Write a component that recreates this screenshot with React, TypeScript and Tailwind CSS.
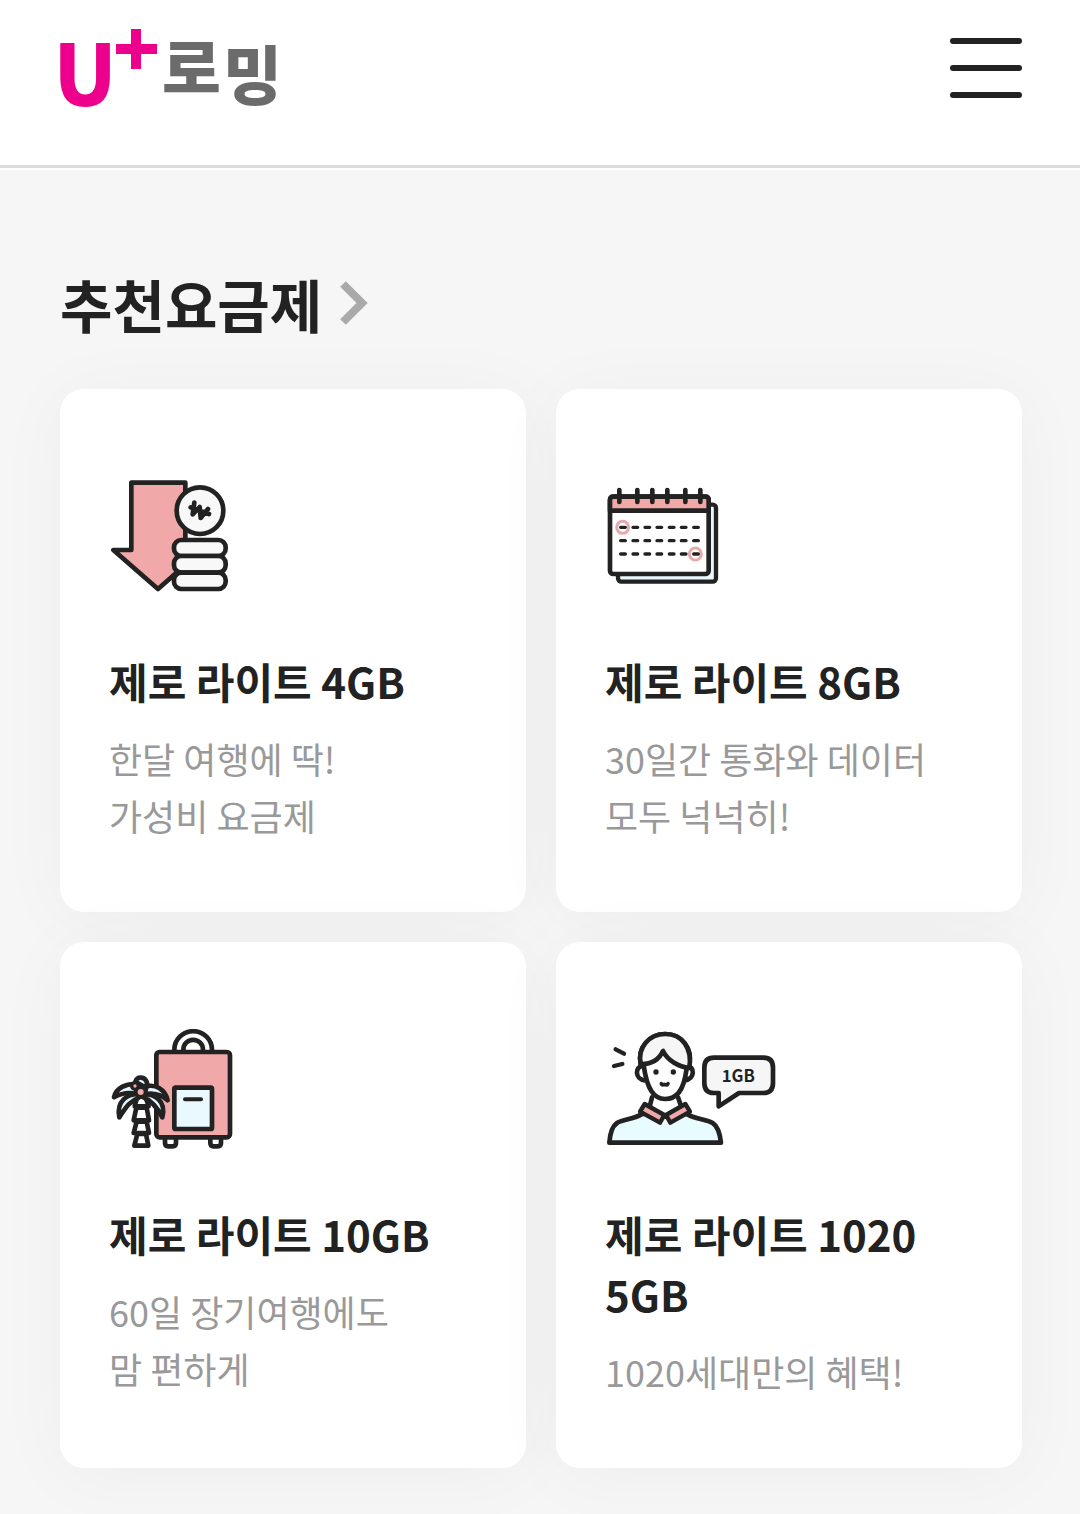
import type { ReactNode } from "react";

const plans = [
  {
    id: "lite-4",
    icon: <SavingIcon />,
    title: "제로 라이트 4GB",
    lines: ["한달 여행에 딱!", "가성비 요금제"],
  },
  {
    id: "lite-8",
    icon: <CalendarIcon />,
    title: "제로 라이트 8GB",
    lines: ["30일간 통화와 데이터", "모두 넉넉히!"],
  },
  {
    id: "lite-10",
    icon: <LuggageIcon />,
    title: "제로 라이트 10GB",
    lines: ["60일 장기여행에도", "맘 편하게"],
  },
  {
    id: "lite-1020",
    icon: <YouthIcon />,
    title: "제로 라이트 1020 5GB",
    lines: ["1020세대만의 혜택!"],
  },
];

export default function App() {
  return (
    <div className="flex min-h-screen flex-col bg-white font-['Noto_Sans_CJK_KR',sans-serif] text-[#222222]">
      <Header />
      <main className="mt-0.5 flex-1 bg-[#f6f6f6] pt-[93px] pr-[58px] pb-[46px] pl-[60px]">
        <h2 className="text-[57px] leading-[80px] font-bold">
          <a href="#plans" className="inline-flex items-center gap-[18px]">
            추천요금제
            <Chevron />
          </a>
        </h2>

        {/* Plan cards */}
        <div id="plans" className="mt-[46px] grid grid-cols-2 gap-[30px]">
          {plans.map((plan) => (
            <PlanCard key={plan.id} icon={plan.icon} title={plan.title} lines={plan.lines} />
          ))}
        </div>
      </main>
    </div>
  );
}

function Header() {
  return (
    <header className="flex items-center justify-between border-b-3 border-[#dddddd] pr-[58px] pb-[29px] pl-[52px]">
      <a href="#" aria-label="U+로밍">
        <Logo />
      </a>
      <button type="button" aria-label="메뉴" className="flex h-[60px] w-[72px] cursor-pointer flex-col justify-between">
        <span className="h-1.5 w-full rounded-full bg-[#222222]" />
        <span className="h-1.5 w-full rounded-full bg-[#222222]" />
        <span className="h-1.5 w-full rounded-full bg-[#222222]" />
      </button>
    </header>
  );
}

function PlanCard({ icon, title, lines }: { icon: ReactNode; title: string; lines: string[] }) {
  return (
    <a
      href="#"
      className="block rounded-3xl bg-white px-[49px] pt-[87px] pb-[68px] shadow-[0_6px_75px_rgba(0,0,0,0.04)]"
    >
      {icon}
      <h3 className="mt-[55px] text-[42px] leading-[60px] font-bold">{title}</h3>
      <p className="mt-[19px] text-[36px] leading-[57px] text-[#999999]">
        {lines.map((line) => (
          <span key={line} className="block">
            {line}
          </span>
        ))}
      </p>
    </a>
  );
}

function Logo() {
  return (
    <svg viewBox="0 0 240 136" className="h-[136px] w-[240px]" fontWeight="900">
      <text x="2" y="105" fontSize="83" fontWeight="700" fill="#ec008c" stroke="#ec008c" strokeWidth="2">
        U
      </text>
      <path d="M64 49H105M84 29V69" stroke="#ec008c" strokeWidth="10" />
      <text x="110" y="92" fontSize="64" fill="#6b6b6b">
        로
      </text>
      <text x="171" y="99" fontSize="64" fill="#6b6b6b">
        밍
      </text>
    </svg>
  );
}

function Chevron() {
  return (
    <svg viewBox="0 0 28 46" className="h-[46px] w-7" fill="none" stroke="#aaaaaa" strokeWidth="8">
      <path d="M3 4L22 23L3 42" />
    </svg>
  );
}

function SavingIcon() {
  return (
    <svg
      viewBox="27 33 372 360"
      className="h-[120px] w-[124px]"
      fill="#f8f8f8"
      stroke="#222222"
      strokeWidth="14"
      strokeLinecap="round"
      strokeLinejoin="round"
    >
      <path d="M94 53H256V300L174 372L40 255H94Z" fill="#f0a8a8" />
      <circle cx="300" cy="137" r="70" />
      <path d="M283 113L278 148L299 126L302 159L324 132M272 127L327 147" fill="none" />
      <rect x="222" y="225" width="155" height="48" rx="22" />
      <rect x="222" y="273" width="155" height="50" rx="22" />
      <rect x="222" y="323" width="155" height="49" rx="22" />
    </svg>
  );
}

function CalendarIcon() {
  return (
    <svg
      viewBox="27 3 372 360"
      className="h-[120px] w-[124px]"
      fill="none"
      stroke="#222222"
      strokeWidth="14"
      strokeLinecap="round"
      strokeLinejoin="round"
    >
      <rect x="66" y="89" width="294" height="231" rx="10" fill="#e9f8fd" strokeWidth="13" />
      <rect x="42" y="65" width="296" height="232" rx="10" fill="#ffffff" />
      <path d="M42 107V75Q42 65 52 65H328Q338 65 338 75V107Z" fill="#f0a8a8" />
      <path d="M70 45V81M124 45V81M169 45V81M214 45V81M268 45V81M313 45V81" />
      <circle cx="80" cy="157" r="18" stroke="#e6aaaa" strokeWidth="9" />
      <circle cx="298" cy="237" r="18" stroke="#e6aaaa" strokeWidth="9" />
      {[157, 197, 237].map((y) => (
        <path
          key={y}
          d={`M74 ${y}h14m23 0h14m22 0h14m22 0h14m23 0h14m22 0h14m23 0h14`}
          strokeWidth="10"
        />
      ))}
    </svg>
  );
}

function LuggageIcon() {
  return (
    <svg
      viewBox="27 42 372 360"
      className="h-[120px] w-[124px]"
      fill="none"
      stroke="#222222"
      strokeWidth="14"
      strokeLinecap="round"
      strokeLinejoin="round"
    >
      {/* Suitcase */}
      <path d="M223 108V104A56 55 0 0 1 336 104V108" fill="#ffffff" />
      <path d="M250 108V104A29 29 0 0 1 309 104V108" fill="#ffffff" />
      <path d="M195 370V384Q195 394 205 394H218Q228 394 228 384V370M331 370V384Q331 394 341 394H353Q363 394 363 384V370" fill="#ffffff" />
      <rect x="169" y="111" width="221" height="256" rx="10" fill="#f0a8a8" />
      <rect x="223" y="218" width="113" height="124" rx="4" fill="#e9f9ff" />
      <path d="M255 253H303" strokeWidth="12" />
      {/* Palm tree */}
      <g strokeWidth="14">
        <path d="M112 244H136L146 274H104ZM109 278H140L147 316H101ZM110 320H140L147 354H101ZM112 357H138L145 392H103Z" fill="#ffffff" />
        <path d="M106 207C80 206 48 218 42 247C61 236 88 231 112 237Z" fill="#e9f9ff" />
        <path d="M113 237C84 238 48 256 58 307C74 284 85 260 118 247Z" fill="#e9f9ff" />
        <path d="M140 214C166 207 195 222 203 256C184 239 162 232 134 237Z" fill="#e9f9ff" />
        <path d="M132 237C161 238 200 255 187 307C173 280 158 258 129 246Z" fill="#e9f9ff" />
        <path d="M106 200C112 182 137 183 142 207L134 216Z" fill="#e9f9ff" />
        <circle cx="105" cy="213" r="10" fill="#f0a8a8" strokeWidth="10" />
        <circle cx="122" cy="231" r="14" fill="#f0a8a8" strokeWidth="10" />
      </g>
    </svg>
  );
}

function YouthIcon() {
  return (
    <svg
      viewBox="27 27 516 360"
      className="h-[120px] w-[172px]"
      fill="none"
      stroke="#222222"
      strokeWidth="14"
      strokeLinecap="round"
      strokeLinejoin="round"
    >
      <path d="M59 88L84 101M54 138L79 132" strokeWidth="13" />
      {/* Shirt and neck */}
      <path d="M40 368C42 342 48 319 63 309C82 297 115 298 138 282H272C297 298 331 297 350 309C366 319 372 342 375 368Z" fill="#e8fbff" />
      <path d="M168 232L160 264L208 290L257 264L246 232" fill="#ffffff" />
      <path d="M146 252L205 285L192 308L132 275Z" fill="#f0a8a8" strokeWidth="13" />
      <path d="M268 252L210 285L223 308L282 275Z" fill="#f0a8a8" strokeWidth="13" />
      {/* Head */}
      <path d="M142 137C116 138 115 178 147 181M272 137C297 138 298 178 266 181" fill="#ffffff" />
      <path d="M134 132C124 83 159 42 208 42C257 42 290 85 280 133L272 145C263 216 240 237 207 237C173 237 153 207 143 136Z" fill="#ffffff" />
      <path d="M134 132C124 83 159 42 208 42C257 42 290 83 280 144C249 141 215 122 201 93C190 117 169 133 134 132Z" fill="#f6f6f6" />
      <circle cx="180" cy="156" r="8" fill="#222222" stroke="none" />
      <circle cx="232" cy="156" r="8" fill="#222222" stroke="none" />
      <path d="M196 191Q197 197 205 193Q215 197 216 191" strokeWidth="11" />
      {/* Speech bubble */}
      <path d="M354 113H502Q531 113 531 143V189Q531 219 502 219H429L368 259V219H354Q325 219 325 189V143Q325 113 354 113Z" fill="#f6f6f6" />
      <text x="427" y="187" fontSize="50" fontWeight="700" textAnchor="middle" fill="#222222" stroke="none">
        1GB
      </text>
    </svg>
  );
}
